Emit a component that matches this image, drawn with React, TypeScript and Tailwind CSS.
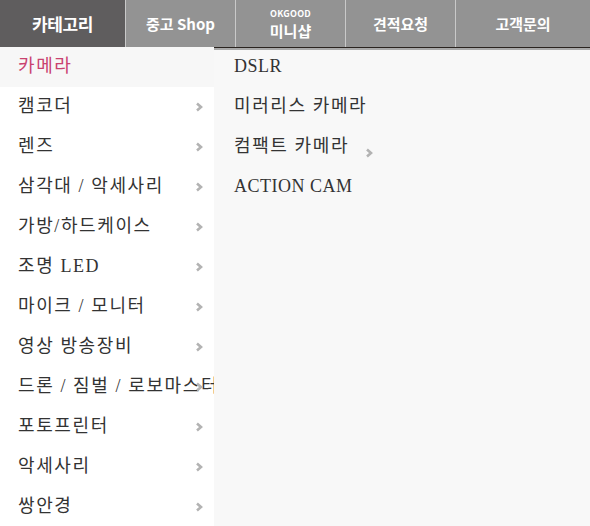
import React from "react";

const tabs = [
  { label: "중고 Shop" },
  { label: "미니샵", top: "OKGOOD" },
  { label: "견적요청" },
  { label: "고객문의" },
];

const categories = [
  "카메라",
  "캠코더",
  "렌즈",
  "삼각대 / 악세사리",
  "가방/하드케이스",
  "조명 LED",
  "마이크 / 모니터",
  "영상 방송장비",
  "드론 / 짐벌 / 로보마스터",
  "포토프린터",
  "악세사리",
  "쌍안경",
];

const subs = [
  { label: "DSLR", ko: false },
  { label: "미러리스 카메라", ko: true },
  { label: "컴팩트 카메라", ko: true, more: true },
  { label: "ACTION CAM", ko: false },
];

function Chevron({ className = "" }: { className?: string }) {
  return (
    <svg width="9" height="10" viewBox="0 0 9 10" className={className}>
      <path d="M2 1.5 L6 5 L2 8.5" fill="none" stroke="#b3b3b3" strokeWidth="2.6" />
    </svg>
  );
}

export default function App() {
  return (
    <div
      className="w-[590px] h-[526px] overflow-hidden bg-white flex flex-col"
      style={{ fontFamily: '"Liberation Serif", "Noto Sans CJK KR", serif' }}
    >
      {/* Top nav */}
      <div
        className="h-[47px] flex shrink-0 bg-[#939393] text-white font-bold"
        style={{ fontFamily: '"Noto Sans CJK KR", "Noto Sans", sans-serif' }}
      >
        <div className="w-[125px] bg-[#5f5d5e] flex items-center justify-center text-[17px] tracking-tight">
          카테고리
        </div>
        {tabs.map((t, i) => (
          <div
            key={t.label}
            className={`${i === 3 ? "flex-1" : "w-[110px]"} border-l border-[#c9c9c9] flex flex-col items-center justify-center`}
          >
            {t.top && <span className="text-[9px] leading-[10px] mb-[3px] tracking-wide">{t.top}</span>}
            <span className="text-[15px] leading-[17px]">{t.label}</span>
          </div>
        ))}
      </div>

      <div className="flex flex-1 min-h-0">
        {/* Left column */}
        <div className="w-[214px] shrink-0 bg-white">
          {categories.map((c, i) => (
            <div
              key={c}
              className={`relative h-[40px] flex items-center pl-[18px] overflow-hidden whitespace-nowrap text-[18px] tracking-[1.6px] ${
                i === 0 ? "bg-[#f7f7f7] text-[#c9426f]" : "text-[#333]"
              }`}
            >
              <span className="-mt-[2px]">{c}</span>
              {i !== 0 && <Chevron className="absolute left-[195px] top-[15px]" />}
            </div>
          ))}
        </div>

        {/* Right panel */}
        <div className="relative flex-1 bg-[#f8f8f8] pl-[20px]">
          <div className="absolute left-0 right-0 top-0 h-px bg-[#2a2420]" />
          <div className="absolute left-0 right-0 top-px h-[2px] bg-[#a9a9a9]" />
          {subs.map((s) => (
            <div
              key={s.label}
              className={`h-[40px] flex items-center text-[18px] text-[#333] whitespace-nowrap ${
                s.ko ? "tracking-[1.6px]" : "tracking-[0.5px]"
              }`}
            >
              <span className="-mt-[2px]">{s.label}</span>
              {s.more && <Chevron className="ml-[16px] mt-[12px]" />}
            </div>
          ))}
        </div>
      </div>
    </div>
  );
}
